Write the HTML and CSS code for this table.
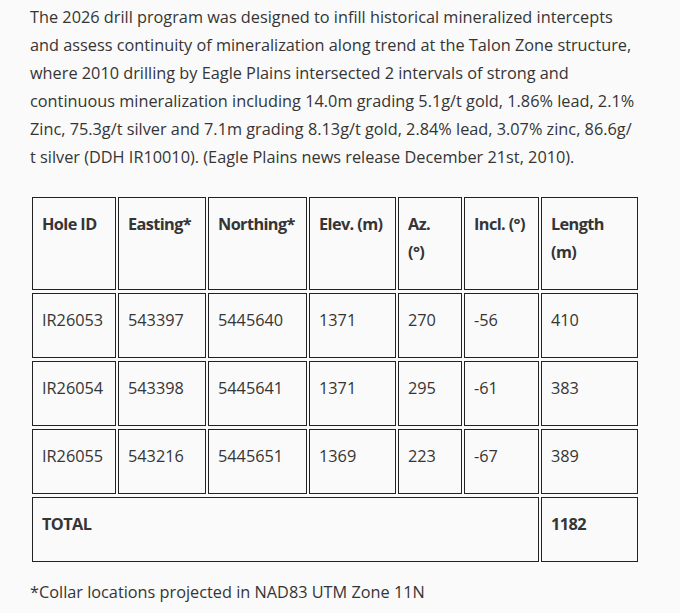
FILE: index.html
```html
<!DOCTYPE html>
<html lang="en">
<head>
<meta charset="utf-8">
<link rel="stylesheet" href="styles.css">
</head>
<body>
<main class="article">
  <p class="lead">The 2026 drill program was designed to infill historical mineralized intercepts and assess continuity of mineralization along trend at the Talon Zone structure, where 2010 drilling by Eagle Plains intersected 2 intervals of strong and continuous mineralization including 14.0m grading 5.1g/t gold, 1.86% lead, 2.1% Zinc, 75.3g/t silver and 7.1m grading 8.13g/t gold, 2.84% lead, 3.07% zinc, 86.6g/<wbr>t silver (DDH IR10010). (Eagle Plains news release December 21st, 2010).</p>
  <table class="drill">
    <colgroup>
      <col class="c-id"><col class="c-east"><col class="c-north"><col class="c-elev"><col class="c-az"><col class="c-incl"><col class="c-len">
    </colgroup>
    <thead>
      <tr><th>Hole ID</th><th>Easting*</th><th>Northing*</th><th class="nowrap">Elev. (m)</th><th class="narrow">Az. (°)</th><th class="nowrap">Incl. (°)</th><th>Length (m)</th></tr>
    </thead>
    <tbody>
      <tr><td>IR26053</td><td>543397</td><td>5445640</td><td>1371</td><td>270</td><td>-56</td><td>410</td></tr>
      <tr><td>IR26054</td><td>543398</td><td>5445641</td><td>1371</td><td>295</td><td>-61</td><td>383</td></tr>
      <tr><td>IR26055</td><td>543216</td><td>5445651</td><td>1369</td><td>223</td><td>-67</td><td>389</td></tr>
      <tr class="total"><td colspan="6">TOTAL</td><td>1182</td></tr>
    </tbody>
  </table>
  <p class="note">*Collar locations projected in NAD83 UTM Zone 11N</p>
</main>
</body>
</html>
```

FILE: styles.css
```css
html, body {
  margin: 0;
  padding: 0;
  background: #fafafa;
}
body {
  font-family: "Open Sans", "Noto Sans", sans-serif;
  font-size: 16.3px;
  line-height: 28px;
  color: #353535;
}
.article {
  width: 610px;
  padding: 3px 30px 0;
}
.lead {
  margin: 0 5px 23px 0;
}
.drill {
  width: 610px;
  table-layout: fixed;
  border-collapse: separate;
  border-spacing: 2px 3px;
}
.c-id { width: 84px; }
.c-east { width: 88px; }
.c-north { width: 99px; }
.c-elev { width: 87px; }
.c-az { width: 64px; }
.c-incl { width: 75px; }
.c-len { width: 97px; }
.drill th, .drill td {
  border: 1px solid #222;
  padding: 12px 10px 23px 9px;
  text-align: left;
  vertical-align: top;
  font-weight: normal;
}
.drill th {
  font-weight: 700;
  height: 56px;
  letter-spacing: -0.6px;
}
.drill th.nowrap {
  white-space: nowrap;
}
.drill th.narrow {
  padding-right: 16px;
}
.drill .total td {
  font-weight: 700;
  letter-spacing: -0.6px;
}
.note {
  margin: 13px 0 0;
}
```
